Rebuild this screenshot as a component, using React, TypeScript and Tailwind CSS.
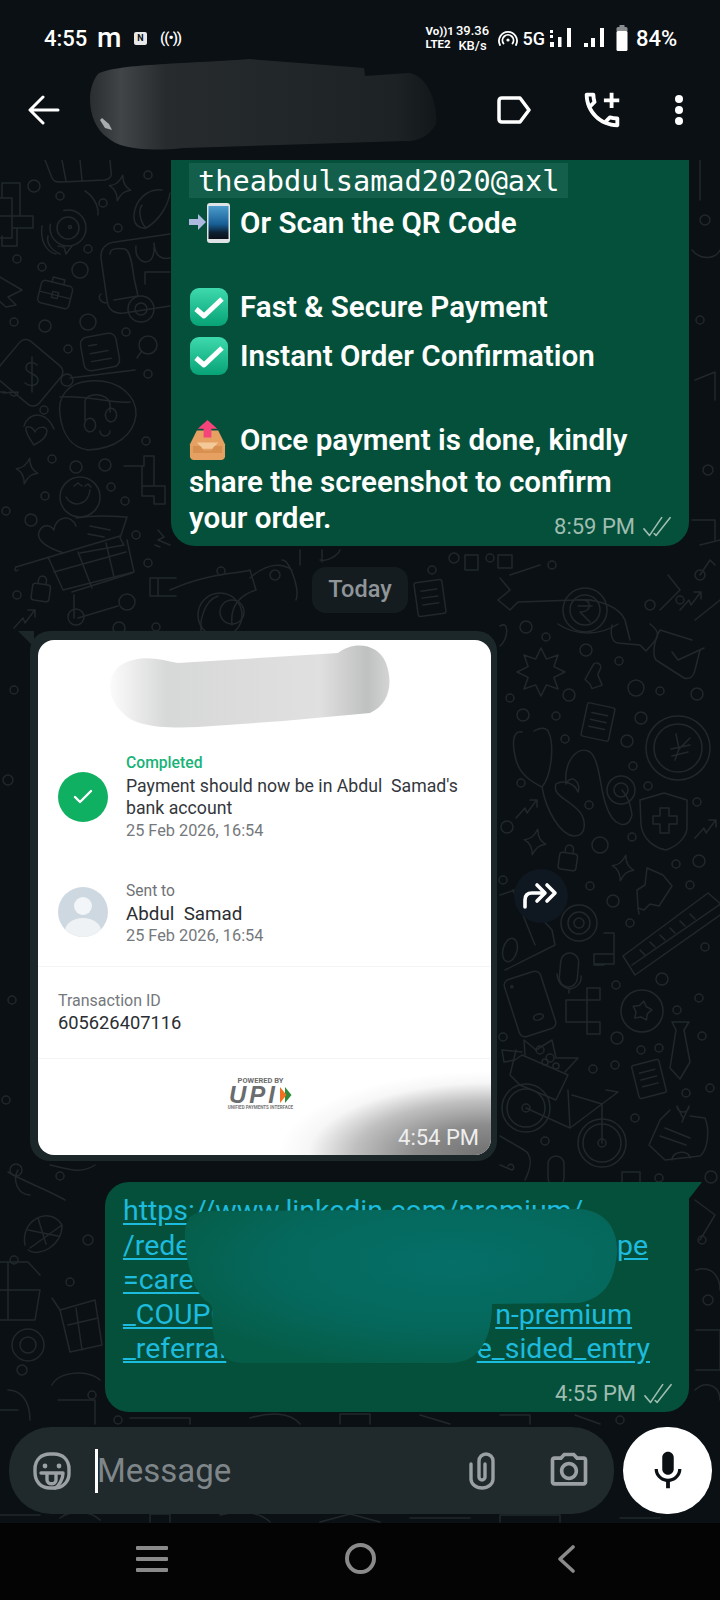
import { Check } from 'lucide-react'
import { MdOutlineAddIcCall, MdOutlinePhotoCamera, MdMic } from 'react-icons/md'

const dots: [number, number, number][] = [
  [526, 627, 6], [546, 637, 4], [586, 650, 6], [619, 661, 4], [636, 688, 8], [660, 691, 4], [697, 694, 6], [569, 695, 6],
  [510, 698, 4], [523, 715, 6], [556, 716, 4], [641, 718, 6], [627, 741, 6], [565, 739, 4], [633, 766, 4], [521, 783, 4],
  [648, 786, 4], [589, 805, 4], [697, 802, 4], [507, 827, 6], [632, 837, 4], [600, 845, 8], [676, 864, 4], [699, 861, 6],
  [590, 886, 4], [690, 885, 4], [613, 901, 6], [503, 880, 4], [630, 923, 4], [705, 947, 4], [662, 979, 6], [616, 985, 4],
  [699, 998, 4], [677, 1010, 4], [617, 1038, 6], [503, 1037, 4], [702, 1036, 4], [641, 1050, 4], [659, 1048, 4], [593, 1069, 4],
  [615, 1065, 4], [686, 1093, 4], [710, 1088, 4], [635, 1118, 4], [545, 1141, 4], [711, 1177, 6], [659, 1178, 4],
  [34, 186, 6], [60, 196, 4], [103, 203, 4], [148, 175, 4], [118, 228, 4], [88, 249, 4], [17, 259, 4], [42, 267, 4], [80, 270, 8],
  [14, 322, 4], [45, 326, 6], [88, 322, 8], [126, 332, 4], [68, 349, 4], [148, 374, 4], [67, 380, 6],
  [44, 410, 4], [146, 441, 4], [52, 459, 4], [76, 467, 6], [105, 465, 6], [111, 487, 4], [45, 496, 4], [125, 501, 4], [6, 511, 4],
  [31, 520, 6], [136, 535, 4], [148, 563, 4], [17, 595, 4], [156, 627, 4], [119, 628, 6],
  [221, 571, 4], [275, 575, 5], [432, 570, 4], [454, 558, 5], [490, 558, 4], [552, 565, 4], [650, 605, 5], [680, 600, 4], [700, 575, 5],
  [14, 690, 4], [8, 780, 5], [12, 1000, 4], [6, 1100, 4], [16, 1170, 6], [60, 1176, 4], [14, 1260, 4], [88, 1240, 5], [70, 1282, 4],
  [22, 1370, 5], [92, 1395, 4], [705, 220, 5], [700, 320, 4], [708, 470, 5], [702, 1240, 4], [708, 1300, 5], [620, 1420, 4], [118, 1420, 4],
]

const star = (n: number, r1: number, r2: number) => {
  const pts: string[] = []
  for (let i = 0; i < n * 2; i++) {
    const a = (Math.PI * i) / n - Math.PI / 2
    const r = i % 2 ? r2 : r1
    pts.push(`${(r * Math.cos(a)).toFixed(1)},${(r * Math.sin(a)).toFixed(1)}`)
  }
  return pts.join(' ')
}

const Sparkle = ({ x, y }: { x: number; y: number }) => (
  <path transform={`translate(${x} ${y}) rotate(12)`} d="M0-13C2-5 5-2 11 0 5 2 2 5 0 13-2 5-5 2-11 0-5-2-2-5 0-13Z" />
)
const Paper = ({ x, y, r = 12 }: { x: number; y: number; r?: number }) => (
  <g transform={`translate(${x} ${y}) rotate(${r})`}>
    <rect x="-14" y="-17" width="28" height="34" rx="2" />
    <path d="M-8-8H8M-8-1H8M-8 6H8" />
  </g>
)
const Lock = ({ x, y }: { x: number; y: number }) => (
  <g transform={`translate(${x} ${y}) rotate(8)`}>
    <rect x="-9" y="-7" width="18" height="17" rx="3" />
    <path d="M-4-7V-11A4 4 0 0 1 4-11V-7" />
  </g>
)
const Trend = ({ x, y }: { x: number; y: number }) => (
  <path transform={`translate(${x} ${y})`} d="M-10 10L-1 0 1 5 10-7M4-8H11V-1" />
)

function Wallpaper() {
  return (
    <svg className="absolute inset-0" width="720" height="1363" viewBox="0 160 720 1363" fill="none" stroke="#21282b" strokeWidth="1.5" strokeLinejoin="round" strokeLinecap="round">
      {dots.map(([x, y, r], i) => <circle key={i} cx={x} cy={y} r={r} />)}

      {/* left column */}
      <path d="M45 160L52 178C54 182 57 182 62 182L105 180C110 179 112 176 111 172L110 160M62 160L66 181M80 160L82 180" />
      <Sparkle x={120} y={188} />
      <path d="M162 190C148 188 135 200 134 215 133 225 140 229 146 228 160 220 168 205 170 193M142 205C138 210 140 222 146 228" />
      <path d="M-2 198H12V216H-2M12 198V238H-2M12 216H33V228H12M2 198V183H20V216M2 236V246H17V228" />
      <g>
        <circle cx="68" cy="228" r="11" /><circle cx="68" cy="228" r="18" strokeDasharray="60 20" /><circle cx="70" cy="227" r="1.5" />
        <path d="M98 215C99 205 92 195 85 191M48 236C46 245 52 250 60 254M42 226C40 240 46 252 56 254" />
        <path d="M58 246L64 247 66 254 72 246" />
      </g>
      <g transform="translate(55 295) rotate(14)">
        <rect x="-16" y="-12" width="32" height="23" rx="4" /><path d="M-6-12V-17H6V-12M-16 0H16" /><rect x="-3" y="-3" width="6" height="6" />
      </g>
      <path d="M-2 276L22 290 8 297 16 305 6 307-2 300" />
      <path d="M170 234L115 242C105 243 100 250 101 258L107 300C108 310 114 314 124 313L170 306M110 254C110 248 118 248 125 249 130 251 132 262 134 278L138 296 114 300M136 246C135 255 138 260 145 262 152 262 155 255 154 243M154 243C155 255 160 260 170 258M145 284V272H170M101 294C98 296 99 302 106 303" />
      <circle cx="141" cy="309" r="13" /><circle cx="141" cy="309" r="6" />
      <g transform="translate(100 352) rotate(-10)">
        <rect x="-18" y="-17" width="36" height="34" rx="7" /><path d="M-10-8H-2M-10 0H8M-10 8H10" />
      </g>
      <circle cx="148" cy="345" r="9" /><path d="M141 352L137 358" />
      <g transform="translate(30 372) rotate(40)">
        <rect x="-27" y="-24" width="54" height="50" rx="8" />
      </g>
      <path d="M37 365C33 361 26 362 26 368 26 374 38 373 38 380 38 386 30 387 25 383M32 357V392" />
      <path d="M3 393L18 392A4 4 0 1 1 10 392M0 392H5" />
      <path d="M130 402C110 404 90 395 60 397M70 378L135 370" />
      <path d="M60 418C57 400 68 385 90 384 120 382 137 400 136 418 134 438 115 452 88 453 70 450 62 435 60 418Z" transform="translate(0 -3)" />
      <path d="M85 420V402C85 392 108 392 110 404V412M85 422A5 6 0 1 0 95 428 5 6 0 1 0 85 422M106 412A5 6 0 1 0 116 418 5 6 0 1 0 106 412M100 431A5 5 0 1 0 110 431" />
      <path d="M34 447C26 428 8 430 4 444" transform="translate(20 -18)" />
      <path d="M34 445C28 437 22 425 29 427 32 427 34 430 35 432 37 427 46 425 47 431 47 437 40 442 34 445Z" />
      <Sparkle x={27} y={471} />
      <path d="M124 466H144V456H154V486H142V466M142 486V496H154M154 486H165V504H154V496" />
      <circle cx="80" cy="497" r="20" /><path d="M66 497C72 508 88 506 90 490M74 486L78 483 82 486M85 486L88 484 91 487" />
      <path d="M64 553C47 548 36 540 39 532 42 524 50 524 54 530 55 516 72 514 76 526M76 518C95 515 110 516 127 517L120 538 124 545 80 553M90 526L110 530M88 534L104 537" />
      <path d="M16 567L120 536M48 557L63 590 134 572 127 540M78 552L92 588M106 543L114 577M54 572L126 552" />
      <path d="M72 592L132 573M16 567C14 570 15 572 18 570M74 595V618M78 618L118 606" />
      <circle cx="76" cy="617" r="8" /><circle cx="127" cy="602" r="8" />
      <path d="M150 578H176M150 578V596H158V578M158 596H176" />
      <Lock x={41} y={591} />
      <Trend x={24} y={618} />
      <path d="M158 530L164 537 158 540 170 545M155 545L160 547" />

      {/* middle strip */}
      <path d="M170 590C210 572 240 574 250 570L256 590C240 595 230 606 232 625M205 640C195 625 205 600 218 596" />
      <circle cx="220" cy="615" r="22" /><circle cx="232" cy="612" r="12" />
      <path d="M250 578C270 560 285 565 292 570M296 600C300 590 290 560 282 560" />
      <path d="M340 550C338 555 328 562 320 560" />
      <path d="M465 555H478V570H465ZM498 555H512V568H498ZM510 575L540 565M300 550V565M322 550V562" />
      <Paper x={430} y={598} r={-8} />
      <path d="M500 578L510 590 498 600 510 610 518 602 575 600C600 598 620 608 625 620L630 640" />
      <circle cx="585" cy="610" r="22" /><circle cx="585" cy="610" r="15" />
      <path d="M578 600H592M578 606H592M583 600C592 600 592 612 580 612L590 622" />
      <path d="M668 575L680 590 660 610M700 545L720 540M695 620L720 600M700 575L710 560 715 565" />
      <Trend x={690} y={600} />

      {/* right column */}
      <polygon transform="translate(541 672)" points={star(8, 24, 14)} />
      <path d="M500 626C510 620 508 640 500 646M558 624C575 636 600 636 618 624" />
      <path d="M612 625C610 635 612 642 618 643L640 645 646 651 654 642C660 635 658 630 650 624" />
      <path d="M660 630L692 640M660 630C654 640 652 655 656 660L684 678C690 680 694 676 695 670L700 650" />
      <path d="M672 652L678 660 704 648" />
      <g transform="translate(595 677) rotate(15)">
        <path d="M-5-11A4 4 0 1 1 3-9L2-3 9 6 0 12-3 8-9 5Z" />
      </g>
      <Paper x={598} y={722} r={12} />
      <circle cx="678" cy="748" r="32" /><circle cx="678" cy="748" r="24" />
      <path d="M676 734L679 749 675 760M690 738L679 749M671 749L690 745M672 756L688 752" />
      <path d="M522 732C512 730 512 745 516 760 520 775 532 782 542 787 552 775 554 745 549 733 547 727 540 727 534 731M542 787C546 810 560 835 574 836 588 836 586 818 578 810 566 798 552 795 556 784M556 784C562 780 574 782 578 792A6 8 0 1 0 566 784C564 760 578 745 590 752 600 760 600 790 606 805 612 825 628 832 632 815 630 800 626 795 622 790" />
      <circle cx="621" cy="790" r="14" /><circle cx="621" cy="790" r="7" />
      <path d="M664 793L640 800 641 825C643 840 655 848 666 850 680 845 688 835 687 825V800Z" />
      <path d="M660 808H669V816H677V824H669V833H660V824H653V816H660Z" />
      <Trend x={526} y={808} />
      <Trend x={705} y={828} />
      <Sparkle x={535} y={842} />
      <Lock x={568} y={860} />
      <Sparkle x={623} y={868} />
      <path d="M647 868L663 875 672 886 659 906 650 904 644 910 638 908 637 890 645 885Z" />
      <path d="M638 908L639 914" />
      <path d="M623 956L708 893 722 905M632 965L722 903M623 956L635 975 720 915" />
      <path d="M640 950L645 955M650 942L655 947M660 935L665 940M670 928L675 933M680 921L685 926M690 914L695 919" />
      <circle cx="579" cy="923" r="18" /><circle cx="579" cy="923" r="11" /><circle cx="579" cy="923" r="5" />
      <path d="M500 895L515 890 552 930 555 945 505 970M513 890L535 945" />
      <ellipse cx="510" cy="950" rx="7" ry="12" transform="rotate(15 510 950)" />
      <rect x="560" y="953" width="18" height="34" rx="9" transform="rotate(5 569 970)" />
      <path d="M557 974C558 985 565 988 570 989 577 988 582 982 581 976M569 989V993" />
      <path d="M594 954H614V964H594M604 964V964M594 954V964M604 933H614V964M594 964V965H604" />
      <g transform="translate(530 1004) rotate(-18)">
        <rect x="-19" y="-30" width="38" height="60" rx="6" /><ellipse cx="4" cy="15" rx="5" ry="3" /><circle cx="-12" cy="-22" r="1" />
      </g>
      <path d="M566 1000H600V988H587V1034H600V1022H566Z" />
      <circle cx="642" cy="1011" r="21" />
      <polygon transform="translate(642 1011) rotate(10)" points={star(5, 10, 6)} />
      <path d="M672 1022H689L684 1030 690 1062 680 1079 670 1068 676 1030Z" />
      <Paper x={649} y={1079} r={-14} />
      <path d="M670 1110L660 1120 649 1145 665 1160 700 1156C708 1150 710 1130 705 1118L690 1116" />
      <path d="M660 1136L686 1145M665 1128L690 1138M672 1160C672 1150 690 1150 690 1158M683 1118L677 1106A5 5 0 1 0 689 1106L682 1122" />
      <circle cx="526" cy="1108" r="24" /><circle cx="526" cy="1108" r="19" /><circle cx="526" cy="1108" r="4" />
      <circle cx="602" cy="1143" r="24" /><circle cx="602" cy="1143" r="19" /><circle cx="602" cy="1143" r="4" />
      <path d="M526 1108L570 1128 602 1104 602 1143M568 1090L570 1128M572 1095L602 1104M602 1104L618 1092 606 1090" />
      <path d="M516 1050L510 1075 520 1085 556 1100 568 1075 522 1055 515 1060 504 1062 502 1050 522 1052" />
      <path d="M525 1055L524 1040 536 1050 552 1040 556 1058 578 1058 565 1072" />
      <circle cx="540" cy="1050" r="4" /><circle cx="550" cy="1058" r="4" /><circle cx="545" cy="1062" r="3" /><circle cx="556" cy="1066" r="3" />
      <path d="M500 1136L524 1150C534 1156 530 1170 525 1180M500 1165L512 1170A3 3 0 1 0 508 1166" />
      <rect x="548" y="1156" width="16" height="30" rx="8" />
      <path d="M622 1182V1172H640V1182" />

      {/* left of the last bubble */}
      <path d="M8 1172C25 1182 48 1190 65 1200M18 1170C12 1180 18 1195 30 1195M50 1165C65 1168 80 1175 95 1165" />
      <path d="M25 1245C20 1220 50 1205 62 1225 62 1245 40 1258 28 1250M30 1248L62 1225M38 1218L46 1244M28 1230L58 1236" />
      <path d="M0 1262H28L40 1275M0 1290H40M8 1262V1320M0 1320H35L40 1290" />
      <path d="M60 1310L95 1300 102 1345 70 1352ZM68 1325L98 1318M76 1308L82 1350M60 1310L52 1298" />
      <circle cx="28" cy="1345" r="16" /><circle cx="28" cy="1345" r="8" />
      <path d="M52 1385C60 1370 90 1370 100 1380M8 1390C20 1390 30 1400 30 1420M58 1400H95V1424M0 1410H18" />
      <path d="M700 160V200M692 250C700 260 715 260 720 250M695 380L715 372V400M692 520H715V540" />
      <path d="M695 1200L715 1215 700 1240M696 1270C710 1265 720 1275 720 1290M696 1330H720V1370H696M695 1390C705 1380 720 1385 720 1400" />
      <path d="M130 1418H190V1424M250 1418C270 1412 290 1412 300 1424M340 1424V1414H370V1424M420 1415L450 1424M500 1415H530V1424M575 1415L600 1424" />
      <path d="M0 1515H40M60 1518C70 1510 90 1510 100 1520M150 1522V1514H170V1522M220 1515C240 1510 260 1512 270 1522M320 1522L350 1514 380 1522M410 1518H470M500 1522V1515H560V1522M620 1518H660" />
    </svg>
  )
}

// the blurred patches that hide names and links in the screenshot
function HeaderBlur() {
  return (
    <svg className="absolute left-[84px] top-[56px]" width="356" height="96" viewBox="0 0 356 96">
      <defs>
        <linearGradient id="hb" x1="0" x2="1" y1="0" y2="0">
          <stop offset="0" stopColor="#2a2e30" />
          <stop offset="0.09" stopColor="#414547" />
          <stop offset="0.22" stopColor="#272b2d" />
          <stop offset="0.6" stopColor="#212628" />
          <stop offset="0.88" stopColor="#1d2225" />
          <stop offset="1" stopColor="#12171a" />
        </linearGradient>
      </defs>
      <path d="M14 18C30 8 100 8 165 3L280 12 281 20 325 17C345 20 354 50 352 68 345 82 330 86 320 85L100 92C60 96 35 92 24 82 5 70 0 35 14 18Z" fill="url(#hb)" />
      <path d="M16 64L21 72 28 74 25 68 18 62Z" fill="#a9acad" />
    </svg>
  )
}

function CardBlur() {
  return (
    <svg className="absolute left-[70px] top-[5px]" width="285" height="84" viewBox="0 0 285 84">
      <defs>
        <linearGradient id="cb" x1="0" x2="1" y1="0" y2="0">
          <stop offset="0" stopColor="#fbfbfb" />
          <stop offset="0.2" stopColor="#d7d8d8" />
          <stop offset="0.5" stopColor="#dcdcdc" />
          <stop offset="0.75" stopColor="#e0e0e0" />
          <stop offset="0.92" stopColor="#bfc0c0" />
          <stop offset="1" stopColor="#d4d4d4" />
        </linearGradient>
      </defs>
      <path d="M10 22C30 8 50 14 70 18L230 8C245 -4 270 -2 278 18 286 40 280 60 262 68L175 76 90 82C50 84 25 80 15 68 0 55 -2 35 10 22Z" fill="url(#cb)" />
    </svg>
  )
}

function LinkBlur() {
  return (
    <svg className="absolute left-[79px] top-[21px]" width="436" height="162" viewBox="0 0 436 162">
      <defs>
        <radialGradient id="lb" cx="0.62" cy="0.35" r="0.7">
          <stop offset="0" stopColor="#056f68" />
          <stop offset="0.6" stopColor="#05685c" />
          <stop offset="1" stopColor="#055d48" />
        </radialGradient>
      </defs>
      <path d="M22 8L395 6C425 8 434 30 433 50 430 80 420 95 395 100L308 101C308 135 296 160 266 160H60C38 160 30 145 28 120 28 108 30 102 22 98 5 85 -2 35 2 22 5 12 12 9 22 8Z" fill="url(#lb)" />
    </svg>
  )
}

function CheckEmoji() {
  return (
    <svg width="40" height="40" viewBox="0 0 40 40">
      <defs>
        <linearGradient id="ce" x1="0" x2="0" y1="0" y2="1">
          <stop offset="0" stopColor="#3fd9ae" />
          <stop offset="1" stopColor="#08a277" />
        </linearGradient>
      </defs>
      <rect x="1" y="1" width="38" height="38" rx="9" fill="url(#ce)" />
      <path d="M7 22L15 29 33 12" fill="none" stroke="#fff" strokeWidth="5" strokeLinejoin="round" />
    </svg>
  )
}

function PhoneEmoji() {
  return (
    <svg width="42" height="40" viewBox="0 0 42 40">
      <path d="M0 16H9V11L17 19 9 27V22H0Z" fill="#aeb9e0" />
      <rect x="18" y="0" width="23" height="40" rx="3" fill="#dfe3e6" />
      <rect x="19.5" y="3" width="20" height="33" fill="url(#ps)" />
      <defs>
        <linearGradient id="ps" x1="0" x2="0" y1="0" y2="1">
          <stop offset="0" stopColor="#4d9ccd" />
          <stop offset="0.55" stopColor="#175f96" />
          <stop offset="0.8" stopColor="#0d2234" />
          <stop offset="1" stopColor="#0a1119" />
        </linearGradient>
      </defs>
    </svg>
  )
}

function TrayEmoji() {
  return (
    <svg width="37" height="40" viewBox="0 0 38 46" preserveAspectRatio="none">
      <path d="M8 12H30L37 28V42C37 44 35 46 33 46H5C3 46 1 44 1 42V28Z" fill="#e6a162" />
      <path d="M8 26H30L24 33H14Z" fill="#f4c999" />
      <path d="M19 0L29 10H23V20H15V10H9Z" fill="#f4447a" />
      <path d="M4 30H12L15 35H23L26 30H34V38H4Z" fill="#c97f40" opacity=".5" />
    </svg>
  )
}

function Ticks() {
  return (
    <svg width="28" height="24" viewBox="0 0 30 24" fill="none" stroke="currentColor" strokeWidth="1.7" strokeLinecap="round" strokeLinejoin="round">
      <path d="M1 14L7 21 20 2M12 19L14 21 29 2" />
    </svg>
  )
}

function MessageMeta({ time }: { time: string }) {
  return (
    <div className="flex items-center gap-[8px] text-[22px] leading-[26px] text-[#9fbdb1]">
      <span>{time}</span>
      <Ticks />
    </div>
  )
}

function LinkLine({ left, right, w }: { left: string; right?: string; w: string }) {
  return (
    <div className={`flex justify-between whitespace-nowrap text-[28.5px] leading-[34.5px] text-[#1dbbdd] underline underline-offset-[3px] ${w}`}>
      <span>{left}</span>
      {right && <span>{right}</span>}
    </div>
  )
}

export default function App() {
  return (
    <div className="flex h-[1600px] w-[720px] flex-col overflow-hidden bg-[#0b1014] font-['Roboto',sans-serif] text-white">
      {/* status bar + header */}
      <div className="relative h-[160px] shrink-0">
        <HeaderBlur />
        <div className="relative flex h-[32px] translate-y-[22px] items-center pl-[44px] pr-[43px] text-[22px] font-medium">
          <span className="w-[43px]">4:55</span>
          <span className="ml-[10px] w-[21px] text-[28px] leading-none font-medium">m</span>
          <span className="ml-[16px] flex h-[13px] w-[13px] items-center justify-center rounded-[2px] bg-[#e8e8e8] text-[9px] leading-none font-bold text-[#0b1014]">N</span>
          <span className="ml-[13px] text-[15px] tracking-[-1px]">((•))</span>
          <div className="ml-auto flex items-center">
            <div className="w-[27px] text-[11.5px] leading-[13px] font-bold">
              <div>Vo))1</div>
              <div>LTE2</div>
            </div>
            <div className="ml-[2px] w-[36px] text-center text-[13px] leading-[15px]">
              <div>39.36</div>
              <div>KB/s</div>
            </div>
            <svg className="ml-[7px]" width="20" height="20" viewBox="0 0 20 20" fill="none" stroke="#fff" strokeWidth="1.8" strokeLinecap="round">
              <path d="M2 17A9 9 0 1 1 18 17M5.5 15.5A5.5 5.5 0 1 1 14.5 15.5" /><circle cx="10" cy="12" r="1.6" fill="#fff" stroke="none" />
            </svg>
            <span className="ml-[5px] text-[18px] font-medium">5G</span>
            <svg className="ml-[5px]" width="24" height="22" viewBox="0 0 24 22" fill="#fff">
              <rect x="0" y="3" width="3" height="3" /><rect x="0" y="8" width="3" height="3" /><rect x="0" y="15" width="4" height="5" /><rect x="8" y="10" width="3.5" height="10" /><rect x="17" y="1" width="4" height="19" />
            </svg>
            <svg className="ml-[10px]" width="22" height="22" viewBox="0 0 22 22" fill="#fff">
              <rect x="0" y="16" width="4" height="4" /><rect x="7" y="11" width="4" height="9" /><rect x="16" y="1" width="4" height="19" />
            </svg>
            <svg className="ml-[10px]" width="12" height="26" viewBox="0 0 12 26">
              <rect x="3.5" y="0" width="5" height="3" fill="#8a8d8f" /><rect x="0.5" y="2" width="11" height="5" rx="1.5" fill="#8a8d8f" /><rect x="0.5" y="6" width="11" height="20" rx="1.5" fill="#fff" />
            </svg>
            <span className="ml-[8px] w-[41px]">84%</span>
          </div>
        </div>

        <div className="absolute left-0 right-0 top-[90px] flex h-[40px] items-center">
          <svg className="ml-[28px]" width="32" height="32" viewBox="0 0 32 32" fill="none" stroke="#fff" strokeWidth="3" strokeLinecap="round" strokeLinejoin="round">
            <path d="M30 16H3M15 3L2 16 15 29" />
          </svg>
          <svg className="ml-auto" width="36" height="30" viewBox="0 0 36 30" fill="none" stroke="#fff" strokeWidth="3.5" strokeLinejoin="round">
            <path d="M6 3H24L33 15 24 27H6C4 27 3 26 3 24V6C3 4 4 3 6 3Z" />
          </svg>
          <MdOutlineAddIcCall className="ml-[47px]" size={46} color="#fff" />
          <svg className="ml-[49px] mr-[36px]" width="10" height="32" viewBox="0 0 10 32" fill="#fff">
            <circle cx="5" cy="5" r="4" /><circle cx="5" cy="16" r="4" /><circle cx="5" cy="27" r="4" />
          </svg>
        </div>
      </div>

      {/* chat */}
      <div className="relative flex min-h-0 flex-1 flex-col">
        <Wallpaper />

        <div className="relative ml-[171px] w-[518px] rounded-b-[24px] bg-[#05503a] px-[18px] pt-[3px] pb-[6px] text-[29.6px] leading-[34px] font-semibold">
          <div className="flex h-[35px] w-[379px] items-center bg-[#145f4b] pl-[9px] font-['DejaVu_Sans_Mono',monospace] text-[28.6px] font-normal">theabdulsamad2020@axl</div>
          <div className="mt-[5px] flex h-[40px] items-center gap-[9px]"><PhoneEmoji /><span>Or Scan the QR Code</span></div>
          <div className="mt-[44px] flex h-[40px] items-center gap-[11px]"><CheckEmoji /><span>Fast &amp; Secure Payment</span></div>
          <div className="mt-[9px] flex h-[40px] items-center gap-[11px]"><CheckEmoji /><span>Instant Order Confirmation</span></div>
          <div className="mt-[44px] flex h-[40px] items-center gap-[14px]"><TrayEmoji /><span>Once payment is done, kindly</span></div>
          <div className="mt-[5px] h-[34px]">share the screenshot to confirm</div>
          <div className="mt-[2px] flex h-[39px] items-start justify-between font-semibold">
            <span>your order.</span>
            <div className="mt-[13px] font-normal"><MessageMeta time="8:59 PM" /></div>
          </div>
        </div>

        <div className="relative mx-auto mt-[21px] flex h-[46px] w-[96px] items-center justify-center rounded-[14px] bg-[#151c1f] text-[23.5px] font-medium text-[#8f9599]">Today</div>

        <div className="relative mt-[18px] flex items-center">
          <div className="relative ml-[30px] w-[467px] rounded-[20px] bg-[#1c2729] pt-[9px] pr-[6px] pb-[6px] pl-[8px]">
            <div className="absolute -left-[12px] top-0 h-0 w-0 border-t-[16px] border-l-[16px] border-t-[#1c2729] border-l-transparent" />
            <div className="relative h-[515px] overflow-hidden rounded-[16px] bg-white text-[17.7px] leading-[22.5px] text-[#33373c]">
              <CardBlur />
              <div className="flex items-center gap-[18px] pt-[112px] pl-[20px]">
                <div className="flex h-[50px] w-[50px] shrink-0 items-center justify-center rounded-full bg-[#10b062]">
                  <Check size={24} color="#fff" strokeWidth={2.4} />
                </div>
                <div>
                  <div className="text-[15.7px] font-medium text-[#17b377]">Completed</div>
                  <div className="whitespace-pre">Payment should now be in Abdul  Samad's</div>
                  <div>bank account</div>
                  <div className="text-[16.3px] text-[#75787c]">25 Feb 2026, 16:54</div>
                </div>
              </div>
              <div className="flex items-center gap-[18px] border-b border-[#f5f5f5] pt-[38px] pb-[18px] pl-[20px]">
                <svg className="-mt-[4px] shrink-0" width="50" height="50" viewBox="0 0 50 50">
                  <clipPath id="av"><circle cx="25" cy="25" r="25" /></clipPath>
                  <g clipPath="url(#av)">
                    <rect width="50" height="50" fill="#cdd8e1" />
                    <circle cx="25" cy="19" r="9" fill="#f3f6f8" />
                    <ellipse cx="25" cy="44" rx="18" ry="13" fill="#eef2f5" />
                  </g>
                </svg>
                <div>
                  <div className="text-[15.6px] text-[#6f7276]">Sent to</div>
                  <div className="text-[18.8px] whitespace-pre text-[#2a2d31]">Abdul  Samad</div>
                  <div className="text-[16.3px] text-[#75787c]">25 Feb 2026, 16:54</div>
                </div>
              </div>
              <div className="border-b border-[#f5f5f5] pt-[23px] pb-[23px] pl-[20px]">
                <div className="text-[16px] text-[#75787c]">Transaction ID</div>
                <div className="text-[18.3px] text-[#2a2d31]">605626407116</div>
              </div>
              <div className="flex flex-col items-center pt-[18px] pr-[8px]">
                <div className="text-[7.5px] leading-[8px] font-bold text-[#6d6d6d]">POWERED BY</div>
                <div className="flex h-[20px] items-center gap-[1px]">
                  <span className="font-['Liberation_Sans',sans-serif] text-[24px] leading-[20px] font-bold tracking-[3px] text-[#6a6c6e] italic">UPI</span>
                  <svg width="13" height="18" viewBox="0 0 13 18">
                    <path d="M6 1L12.5 9 6 17Z" fill="#2e8b3d" /><path d="M1 1L7.5 9 1 17Z" fill="#f37021" />
                  </svg>
                </div>
                <div className="text-[4.5px] leading-[6px] font-bold text-[#777]">UNIFIED PAYMENTS INTERFACE</div>
              </div>
              <div className="absolute right-0 bottom-0 h-[85px] w-[215px] bg-[radial-gradient(ellipse_at_100%_100%,#707070_0%,#8c8c8c_25%,rgba(170,170,170,0.75)_45%,rgba(230,230,230,0.35)_60%,rgba(255,255,255,0)_70%)]" />
              <span className="absolute right-[12px] bottom-[4px] text-[22px] leading-[26px] text-[#eeeeee]">4:54 PM</span>
            </div>
          </div>
          <div className="ml-[17px] flex h-[54px] w-[54px] items-center justify-center rounded-full bg-[#0f1820]">
            <svg width="38" height="28" viewBox="0 0 38 28" fill="none" stroke="#fff" strokeWidth="3.6" strokeLinecap="round" strokeLinejoin="round">
              <path d="M3 25V18C3 13 6 11 10 11H21M15 3L23 11 15 19M25 3L33 11 25 19" />
            </svg>
          </div>
        </div>

        <div className="relative mt-[21px] ml-[105px] w-[584px] rounded-[24px] rounded-tr-none bg-[#05503a] pt-[12px] pr-[14px] pb-[5px] pl-[18px]">
          <div className="absolute -right-[13px] top-0 h-0 w-0 border-t-[18px] border-r-[14px] border-t-[#05503a] border-r-transparent" />
          <LinkLine left="https://www.linkedin.com/premium/" w="w-[525px]" />
          <LinkLine left="/redeem" right="pe" w="w-[525px]" />
          <LinkLine left="=career" w="w-[525px]" />
          <LinkLine left="_COUPON" right="n-premium" w="w-[509px]" />
          <LinkLine left="_referral" right="e_sided_entry" w="w-[527px]" />
          <LinkBlur />
          <div className="mt-[14px] flex justify-end pr-[3px]"><MessageMeta time="4:55 PM" /></div>
        </div>

        {/* composer */}
        <div className="relative mt-auto flex items-center pr-[8px] pb-[9px] pl-[9px]">
          <div className="flex h-[87px] w-[605px] items-center rounded-[42px] bg-[#20292c] pr-[23px] pl-[24px] text-[#9aa0a3]">
            <svg width="38" height="38" viewBox="0 0 38 38" fill="none" stroke="#9aa0a3" strokeWidth="3.4" strokeLinecap="round" strokeLinejoin="round">
              <path d="M22 36H17C8 36 2 30 2 20V17C2 8 8 2 17 2H21C30 2 36 8 36 17V22C36 29 30 36 22 36Z" />
              <path d="M8 21H30C30 27 26 34 22 36M14 21V28C14 33 23 33 23 28V21" />
              <circle cx="12" cy="14" r="2.4" fill="#9aa0a3" stroke="none" /><circle cx="26" cy="14" r="2.4" fill="#9aa0a3" stroke="none" />
            </svg>
            <div className="ml-[24px] h-[44px] w-[3px] bg-white" />
            <span className="-ml-[1px] text-[33px] leading-[44px] text-[#7f8689]">Message</span>
            <svg className="ml-auto" width="26" height="38" viewBox="0 0 26 38" fill="none" stroke="#9aa0a3" strokeWidth="3.4" strokeLinecap="round">
              <path d="M2 12V27A11 9 0 0 0 24 27V9A7 7 0 0 0 10 9V25A3 3 0 0 0 16 25V12" />
            </svg>
            <MdOutlinePhotoCamera className="ml-[52px]" size={44} color="#9aa0a3" />
          </div>
          <div className="ml-[9px] flex h-[87px] w-[89px] items-center justify-center rounded-full bg-white">
            <MdMic size={46} color="#0b1014" />
          </div>
        </div>
      </div>

      {/* android nav */}
      <div className="flex h-[77px] shrink-0 items-center bg-[#040404] pb-[6px] pl-[136px]">
        <div className="flex w-[32px] flex-col gap-[7px]">
          <div className="h-[4px] rounded-[1px] bg-[#8a8a8a]" />
          <div className="h-[4px] rounded-[1px] bg-[#8a8a8a]" />
          <div className="h-[4px] rounded-[1px] bg-[#8a8a8a]" />
        </div>
        <div className="ml-[177px] h-[31px] w-[31px] rounded-full border-[4px] border-[#8a8a8a]" />
        <svg className="ml-[181px]" width="18" height="28" viewBox="0 0 18 28" fill="none" stroke="#8a8a8a" strokeWidth="3.6" strokeLinecap="round" strokeLinejoin="round">
          <path d="M16 2L3 14 16 26" />
        </svg>
      </div>
    </div>
  )
}
